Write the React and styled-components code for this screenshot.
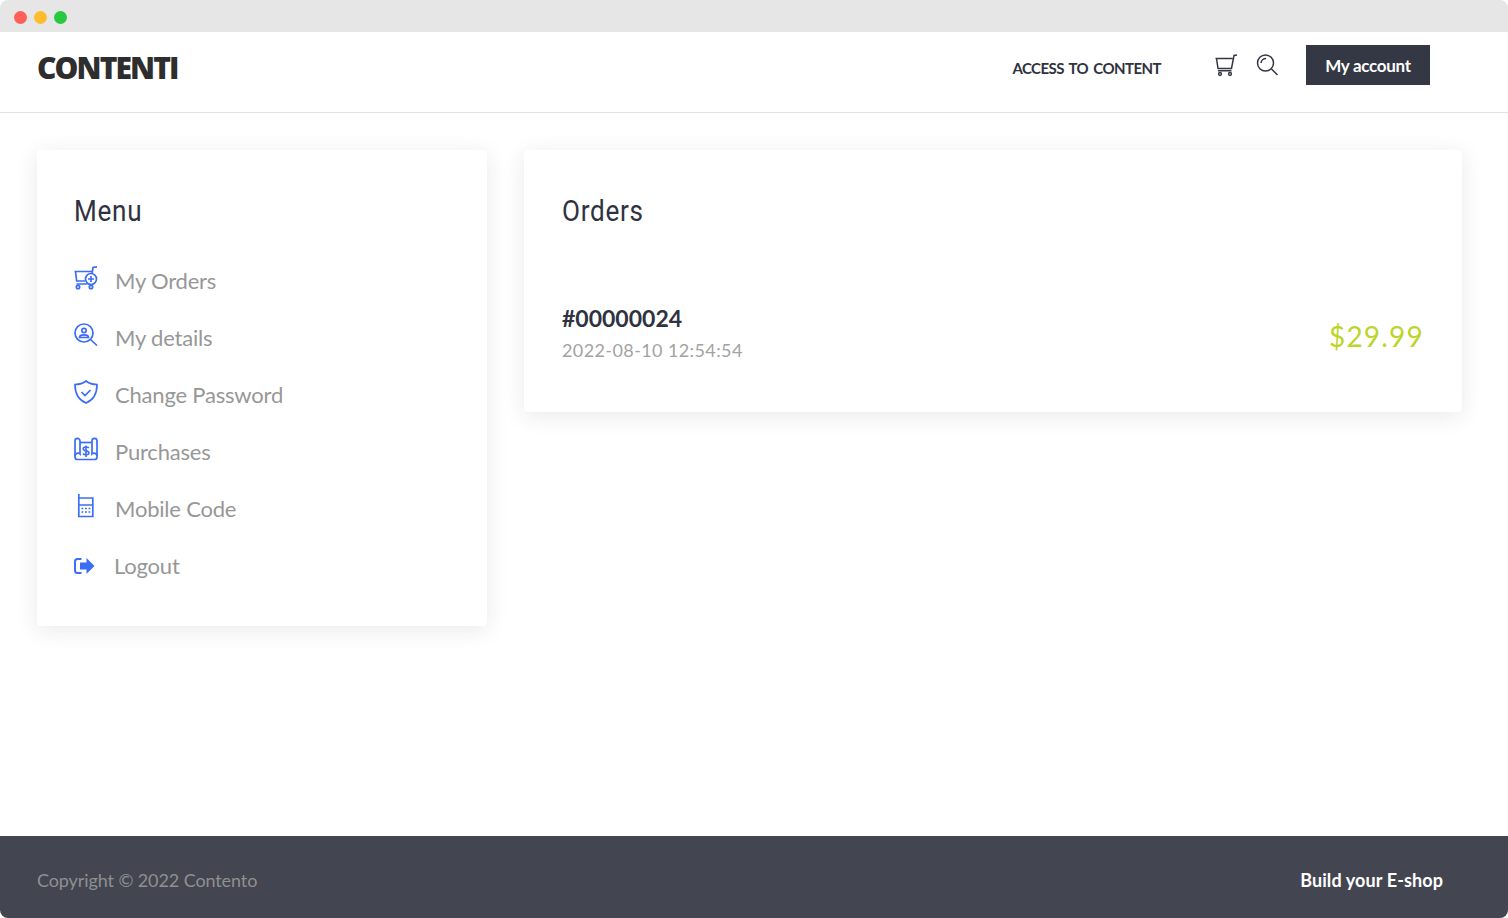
import React from 'react';
import styled, { createGlobalStyle } from 'styled-components';

const GlobalStyle = createGlobalStyle`
  html, body { margin: 0; padding: 0; background: #fff; }
  * { box-sizing: border-box; }
  body { font-family: "Lato", "Liberation Sans", sans-serif; }
`;

const BLUE = '#3b6ef5';

const Window = styled.div`
  height: 918px;
  display: flex;
  flex-direction: column;
  overflow: hidden;
  border-radius: 8px;
  background: #fff;
`;

const TitleBar = styled.div`
  flex: 0 0 32px;
  background: #e6e6e6;
  display: flex;
  align-items: center;
  gap: 7px;
  padding: 2px 0 0 13.5px;
`;

const Dot = styled.span`
  width: 13px;
  height: 13px;
  border-radius: 50%;
  background: ${p => p.$color};
`;

const Header = styled.header`
  flex: 0 0 81px;
  display: flex;
  align-items: flex-start;
  border-bottom: 1px solid #e2e2e2;
  padding: 13px 78px 0 37px;
`;

const Logo = styled.div`
  font-family: "Open Sans", sans-serif;
  font-weight: 800;
  font-size: 30px;
  line-height: 44px;
  letter-spacing: -1.9px;
  color: #2e2e2e;
  margin-top: 1px;
`;

const Nav = styled.a`
  margin-left: auto;
  margin-top: 13px;
  font-size: 15px;
  font-weight: 700;
  line-height: 20px;
  letter-spacing: -0.55px;
  word-spacing: 2px;
  color: #2f3240;
`;

const IconButton = styled.span`
  display: block;
  height: 24px;
  margin-top: 9px;
  color: #343744;
  margin-left: ${p => p.$left}px;
`;

const AccountButton = styled.button`
  width: 124px;
  height: 40px;
  margin-left: 27px;
  border: 0;
  background: #343744;
  color: #fff;
  font-family: inherit;
  font-size: 17px;
  font-weight: 700;
  letter-spacing: -0.3px;
`;

const Main = styled.main`
  flex: 1;
  display: flex;
  align-items: flex-start;
  gap: 37px;
  padding: 37px 46px 0 37px;
`;

const Card = styled.section`
  background: #fff;
  border-radius: 4px;
  box-shadow: 0 4px 22px rgba(40, 40, 60, 0.1);
  padding: 41px 38px;
`;

const MenuCard = styled(Card)`
  flex: 0 0 450px;
  height: 476px;
  padding-left: 37px;
`;

const OrdersCard = styled(Card)`
  flex: 1;
  height: 262px;
`;

const CardTitle = styled.h2`
  margin: 0;
  font-family: "Roboto", sans-serif;
  font-weight: 400;
  font-size: 29px;
  line-height: 40px;
  letter-spacing: 0.8px;
  color: #2f3240;
  transform: scaleX(0.9);
  transform-origin: left center;
`;

const MenuList = styled.ul`
  list-style: none;
  margin: 35px 0 0;
  padding: 0;
  display: flex;
  flex-direction: column;
`;

const MenuItem = styled.li`
  height: 57px;
  display: flex;
  align-items: flex-start;
  gap: ${p => p.$gap || 17}px;
`;

const MenuIcon = styled.span`
  flex: 0 0 24px;
  height: 24px;
  color: ${BLUE};
`;

const MenuLabel = styled.span`
  font-size: 22px;
  line-height: 30px;
  letter-spacing: -0.2px;
  color: #979797;
`;

const OrderRow = styled.div`
  display: flex;
  align-items: center;
  justify-content: space-between;
  margin-top: 71px;
`;

const OrderInfo = styled.div`
  display: flex;
  flex-direction: column;
`;

const OrderNumber = styled.div`
  font-size: 23px;
  font-weight: 700;
  line-height: 32px;
  letter-spacing: 0;
  color: #2f3240;
`;

const OrderDate = styled.div`
  font-size: 18px;
  line-height: 32px;
  letter-spacing: 0.4px;
  color: #a3a3a3;
`;

const Price = styled.div`
  font-size: 28px;
  line-height: 40px;
  letter-spacing: 1.2px;
  padding-top: 4px;
  color: #bdd42a;
`;

const Footer = styled.footer`
  flex: 0 0 82px;
  background: #434550;
  display: flex;
  align-items: center;
  justify-content: space-between;
  padding: 6px 65px 0 37px;
`;

const Copyright = styled.div`
  font-size: 18px;
  letter-spacing: -0.1px;
  color: #8f9092;
`;

const FooterLink = styled.a`
  font-size: 18px;
  font-weight: 700;
  letter-spacing: 0.1px;
  color: #fff;
`;

const CartIcon = () => (
  <svg width="24" height="24" viewBox="0 0 24 24" fill="none" stroke="currentColor" strokeWidth="1.5">
    <path d="M1.500 4.500h17M2.500 4.500l1.500 10h13.500L20 1.500l3-.5M4 16.800h13.500" />
    <circle cx="6" cy="20" r="1.400" />
    <circle cx="16" cy="20" r="1.400" />
  </svg>
);

const SearchIcon = () => (
  <svg width="24" height="24" viewBox="0 0 24 24" fill="none" stroke="currentColor" strokeWidth="1.500">
    <circle cx="10.500" cy="9" r="8" />
    <path d="M6 9a5 5 0 0 1 5-4.500M16.500 15l6 6" />
  </svg>
);

const OrdersIcon = () => (
  <svg width="24" height="24" viewBox="0 0 24 24" fill="none" stroke="currentColor" strokeWidth="1.700">
    <path d="M.5 5.500h17.500M1.500 5.500l1.200 9.500h8.300M18 8l1-6.500 4-.7M2.500 18h11" />
    <circle cx="4" cy="21" r="1.700" />
    <circle cx="17" cy="21" r="1.700" />
    <circle cx="17" cy="13" r="5.500" />
    <path d="M17 10v6M14 13h6" />
  </svg>
);

const DetailsIcon = () => (
  <svg width="24" height="24" viewBox="0 0 24 24" fill="none" stroke="currentColor" strokeWidth="1.700">
    <circle cx="10" cy="10" r="9" />
    <circle cx="10" cy="7.500" r="2.200" />
    <path d="M5.500 14.500c0-3.500 9-3.500 9 0zM16.500 16.500l6.500 6" />
  </svg>
);

const ShieldIcon = () => (
  <svg width="24" height="24" viewBox="0 0 24 24" fill="none" stroke="currentColor" strokeWidth="1.700">
    <path d="M1 4.500C5 4.500 9 3.500 12 1c3 2.500 7 3.500 11 3.500 0 8-2.500 15-11 18.500C3.500 19.500 1 12.500 1 4.500z" />
    <path d="M7.500 12l3.500 3.500 5.500-5.500" />
  </svg>
);

const PurchasesIcon = () => (
  <svg width="24" height="24" viewBox="0 0 24 24" fill="none" stroke="currentColor" strokeWidth="1.700">
    <path d="M1 4v16c0 1.500 1 2.500 2.500 2.500h17c1.500 0 2.500-1 2.500-2.500V4" />
    <path d="M1 4c0-3.500 5-3.500 5 0v13c-1.500-1.500-5-1-5 2" />
    <path d="M23 4c0-3.500-5-3.500-5 0v13c1.500-1.500 5-1 5 2" />
    <path d="M6 5.500h12" />
    <path d="M14.800 11c-1-1.500-5.600-1.500-5.600.8 0 2.800 5.800 1.400 5.800 4.200 0 2.300-5 2.300-6 .5M12 8.500v11.500" strokeWidth="1.600" />
  </svg>
);

const MobileIcon = () => (
  <svg width="24" height="24" viewBox="0 0 24 24" fill="none" stroke="currentColor" strokeWidth="1.700">
    <path d="M4.800 0v22.500h14V4H4.800M4.800 11h14" />
    <path d="M7.500 14.500h1.800M11 14.500h1.800M14.500 14.500h1.800M7.500 18h1.800M11 18h1.800M14.500 18h1.800" strokeWidth="1.300" />
  </svg>
);

const LogoutIcon = () => (
  <svg width="24" height="24" viewBox="0 0 24 24">
    <path d="M7.500 8H3.500C2 8 1 9 1 10.500v9C1 21 2 22 3.500 22h4" fill="none" stroke="currentColor" strokeWidth="2" />
    <path d="M6 11.500h6.500V7l8 8-8 8v-4.500H6z" fill="currentColor" />
  </svg>
);

const menu = [
  { label: 'My Orders', Icon: OrdersIcon },
  { label: 'My details', Icon: DetailsIcon },
  { label: 'Change Password', Icon: ShieldIcon },
  { label: 'Purchases', Icon: PurchasesIcon },
  { label: 'Mobile Code', Icon: MobileIcon },
  { label: 'Logout', Icon: LogoutIcon, gap: 16 },
];

export default function App() {
  return (
    <Window>
      <GlobalStyle />
      <TitleBar>
        <Dot $color="#ff5f57" />
        <Dot $color="#febc2e" />
        <Dot $color="#28c840" />
      </TitleBar>
      <Header>
        <Logo>CONTENTI</Logo>
        <Nav>ACCESS TO CONTENT</Nav>
        <IconButton $left={53}><CartIcon /></IconButton>
        <IconButton $left={17}><SearchIcon /></IconButton>
        <AccountButton>My account</AccountButton>
      </Header>
      <Main>
        <MenuCard>
          <CardTitle>Menu</CardTitle>
          <MenuList>
            {menu.map(({ label, Icon, gap }) => (
              <MenuItem key={label} $gap={gap}>
                <MenuIcon><Icon /></MenuIcon>
                <MenuLabel>{label}</MenuLabel>
              </MenuItem>
            ))}
          </MenuList>
        </MenuCard>
        <OrdersCard>
          <CardTitle>Orders</CardTitle>
          <OrderRow>
            <OrderInfo>
              <OrderNumber>#00000024</OrderNumber>
              <OrderDate>2022-08-10 12:54:54</OrderDate>
            </OrderInfo>
            <Price>$29.99</Price>
          </OrderRow>
        </OrdersCard>
      </Main>
      <Footer>
        <Copyright>Copyright © 2022 Contento</Copyright>
        <FooterLink>Build your E-shop</FooterLink>
      </Footer>
    </Window>
  );
}
